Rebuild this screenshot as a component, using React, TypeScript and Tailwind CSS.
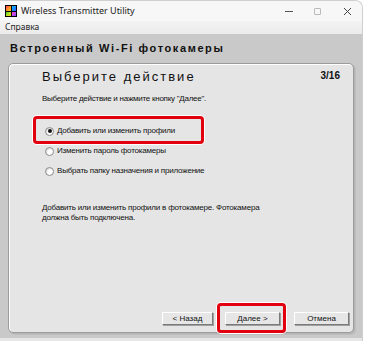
import React from "react";

function Radio({ checked }: { checked?: boolean }) {
  return (
    <span className="w-[9px] h-[9px] rounded-full border border-[#8a8a8a] bg-white flex items-center justify-center shrink-0 shadow-[inset_1px_1px_1px_rgba(0,0,0,0.15)]">
      {checked && <span className="w-[4px] h-[4px] rounded-full bg-[#111]" />}
    </span>
  );
}

function Btn({ children, w }: { children: React.ReactNode; w: string }) {
  return (
    <div className={`${w} h-[13px] bg-[#e6e6e6] border border-t-white border-l-white border-r-[#7a7a7a] border-b-[#7a7a7a] shadow-[1px_1px_0_#a0a0a0] flex items-center justify-center text-[8px] leading-none text-[#111]`}>
      {children}
    </div>
  );
}

export default function App() {
  return (
    <div
      className="w-[365px] h-[341px] bg-white overflow-hidden"
      style={{ fontFamily: '"Liberation Sans", Arial, sans-serif' }}
    >
      <div className="w-[363px] h-[341px] flex flex-col rounded-tr-[8px] border-r border-t border-[#cfcfcf] overflow-hidden bg-[#f3f3f3]">
        {/* title bar */}
        <div className="h-[20px] flex items-center bg-[#f7f7f7] shrink-0">
          <div className="ml-[5px] w-[12px] h-[12px] bg-black p-[1px] grid grid-cols-2 gap-[1px]">
            <div className="bg-gradient-to-br from-[#ff3a3a] to-[#ffd000]" />
            <div className="bg-gradient-to-br from-[#00c0ff] to-[#3050ff]" />
            <div className="bg-gradient-to-br from-[#30d030] to-[#ffe000]" />
            <div className="bg-gradient-to-br from-[#ff40c0] to-[#8040ff]" />
          </div>
          <span className="ml-[4px] text-[9px] text-[#222]" style={{ fontFamily: '"Noto Sans", "Liberation Sans", sans-serif' }}>
            Wireless Transmitter Utility
          </span>
          <div className="ml-auto flex items-center h-full">
            <div className="w-[29px] flex justify-center">
              <div className="w-[8px] h-[1px] bg-[#555]" />
            </div>
            <div className="w-[29px] flex justify-center">
              <div className="w-[7px] h-[7px] border border-[#bbb] rounded-[1px]" />
            </div>
            <div className="w-[30px] flex justify-center">
              <svg width="9" height="9" viewBox="0 0 9 9">
                <path d="M1 1 L8 8 M8 1 L1 8" stroke="#444" strokeWidth="1" />
              </svg>
            </div>
          </div>
        </div>
        {/* menu bar */}
        <div className="h-[13px] flex items-center bg-gradient-to-b from-[#f3f3f3] to-[#ebebeb] shrink-0">
          <span className="ml-[5px] text-[8.5px] text-[#222]" style={{ fontFamily: '"Noto Sans", "Liberation Sans", sans-serif' }}>
            Справка
          </span>
        </div>
        {/* body */}
        <div className="flex-1 bg-[#c9c9c9] flex flex-col px-[8px] pb-[5px] border-b-[3px] border-[#e6e6e6]">
          <div className="h-[29px] flex items-center pl-[2px] shrink-0">
            <span className="text-[11px] font-bold tracking-[1.6px] text-[#111]">
              Встроенный Wi-Fi фотокамеры
            </span>
          </div>
          <div className="flex-1 rounded-[5px] border border-[#9c9c9c] bg-[#e5e5e5] shadow-[inset_1px_1px_0_#ffffff,1px_1px_0_#b5b5b5,2px_2px_0_#bdbdbd] flex flex-col pl-[33px] pr-[13px] pt-[5px] pb-[7px]">
            <div className="flex items-start justify-between">
              <span className="text-[13px] tracking-[2px] text-[#111] leading-[16px]">
                Выберите действие
              </span>
              <span className="text-[10px] font-bold text-[#111] leading-[14px]">3/16</span>
            </div>
            <div className="mt-[9px] text-[8px] tracking-[-0.25px] text-[#111] leading-[10px]">
              Выберите действие и нажмите кнопку "Далее".
            </div>
            <div className="mt-[17px] flex flex-col">
              <div className="relative h-[20px] flex items-center gap-[3px] pl-[3px]">
                <div className="absolute left-[-9px] top-[-5px] w-[171px] h-[28px] rounded-[4px] border-[3px] border-[#e3000f] shadow-[0_0_0_1px_#ffffff]" />
                <Radio checked />
                <span className="text-[8px] tracking-[-0.2px] text-[#111]">Добавить или изменить профили</span>
              </div>
              <div className="h-[20px] flex items-center gap-[3px] pl-[3px]">
                <Radio />
                <span className="text-[8px] tracking-[-0.2px] text-[#111]">Изменить пароль фотокамеры</span>
              </div>
              <div className="h-[20px] flex items-center gap-[3px] pl-[3px]">
                <Radio />
                <span className="text-[8px] tracking-[-0.2px] text-[#111]">Выбрать папку назначения и приложение</span>
              </div>
            </div>
            <div className="mt-[22px] text-[8px] tracking-[-0.2px] leading-[10px] text-[#111]">
              Добавить или изменить профили в фотокамере. Фотокамера
              <br />
              должна быть подключена.
            </div>
            <div className="mt-auto flex justify-end items-center -mr-[9px]">
              <Btn w="w-[51px]">&lt; Назад</Btn>
              <div className="relative ml-[12px]">
                <div className="absolute left-[-8px] top-[-9px] w-[69px] h-[30px] rounded-[4px] border-[3px] border-[#e3000f] shadow-[0_0_0_1px_#ffffff]" />
                <Btn w="w-[55px]">Далее &gt;</Btn>
              </div>
              <div className="ml-[14px]">
                <Btn w="w-[55px]">Отмена</Btn>
              </div>
            </div>
          </div>
        </div>
      </div>
    </div>
  );
}
